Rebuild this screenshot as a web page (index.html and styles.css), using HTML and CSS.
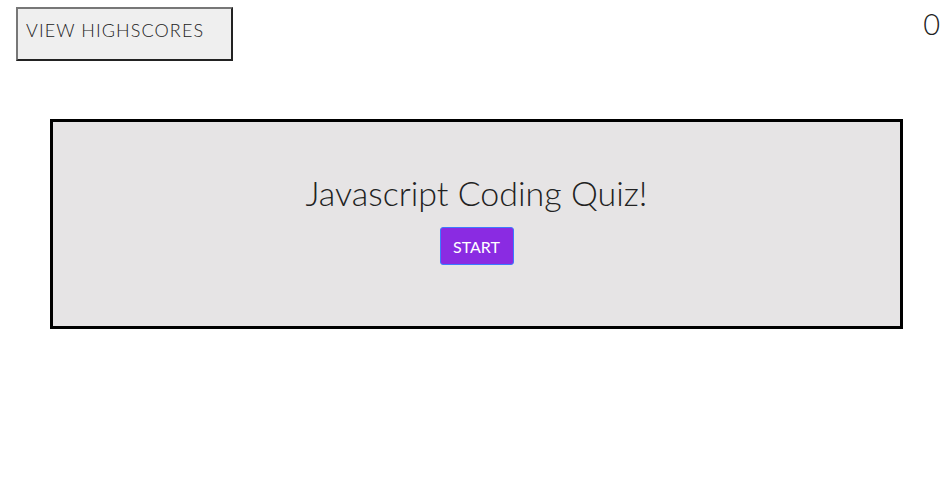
FILE: index.html
```html
<!DOCTYPE html>
<html>
<head>
<meta charset="utf-8">
<link rel="stylesheet" href="styles.css">
</head>
<body>
<header class="top">
  <button class="scores-btn">VIEW HIGHSCORES</button>
  <div class="timer">0</div>
</header>
<main class="quiz">
  <h1 class="title">Javascript Coding Quiz!</h1>
  <button class="start-btn">START</button>
</main>
</body>
</html>
```
FILE: styles.css
```css
html, body {
  margin: 0;
  background: #ffffff;
  font-family: Lato, "Open Sans", sans-serif;
  color: #222;
}
.top {
  display: flex;
  justify-content: space-between;
  align-items: flex-start;
  padding: 7px 11px 0 16px;
}
.scores-btn {
  width: 217px;
  height: 54px;
  box-sizing: border-box;
  border: 2px solid;
  border-color: #777 #222 #222 #777;
  background: #efefef;
  font-family: Lato, sans-serif;
  font-weight: 300;
  font-size: 18px;
  letter-spacing: 1.1px;
  color: #222;
  text-align: left;
  padding: 0 0 8px 8px;
}
.timer {
  font-size: 29px;
  font-weight: 300;
  line-height: 29px;
  padding-top: 2px;
  color: #222;
}
.quiz {
  margin: 58px 48px 0 50px;
  height: 210px;
  box-sizing: border-box;
  border: 3px solid #000;
  background: #e6e4e5;
  display: flex;
  flex-direction: column;
  align-items: center;
  padding-top: 51px;
}
.title {
  margin: 0;
  font-weight: 300;
  font-size: 34px;
  line-height: 40px;
  color: #222;
}
.start-btn {
  margin-top: 14px;
  width: 74px;
  height: 38px;
  box-sizing: border-box;
  background: #8a2be2;
  border: 1px solid #3b7bff;
  border-radius: 3px;
  color: #fff;
  font-family: Lato, sans-serif;
  font-size: 16px;
  padding: 0;
}
```
